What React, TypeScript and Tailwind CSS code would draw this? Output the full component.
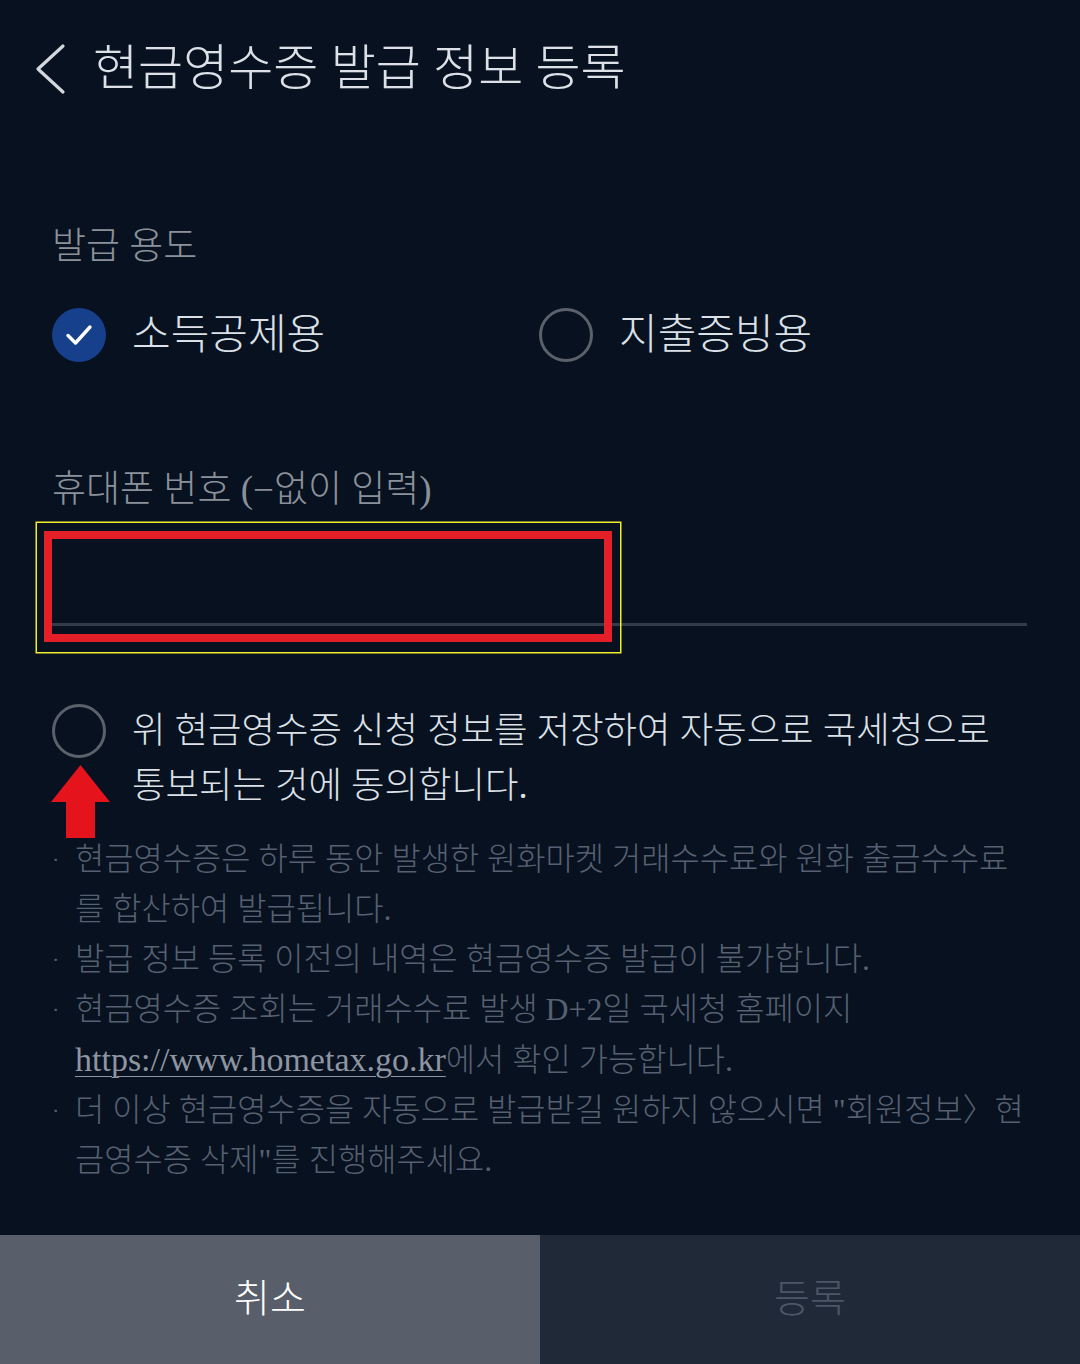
const FONT = "font-['Liberation_Serif','Noto_Sans_CJK_KR',serif]"

function Radio({ checked }: { checked?: boolean }) {
  if (checked) {
    return (
      <span className="flex h-[54px] w-[54px] shrink-0 items-center justify-center rounded-full bg-[#163f8c]">
        <svg width="30" height="24" viewBox="0 0 30 24" fill="none">
          <path d="M4 12.5 L11.5 20 L26 4" stroke="#ffffff" strokeWidth="3.4" strokeLinecap="round" strokeLinejoin="round" />
        </svg>
      </span>
    )
  }
  return <span className="block h-[54px] w-[54px] shrink-0 rounded-full border-[3px] border-[#5b616b]" />
}

const notes: string[][] = [
  ["현금영수증은 하루 동안 발생한 원화마켓 거래수수료와 원화 출금수수료", "를 합산하여 발급됩니다."],
  ["발급 정보 등록 이전의 내역은 현금영수증 발급이 불가합니다."],
]

export default function App() {
  return (
    <div className={`flex min-h-[1364px] w-[1080px] flex-col bg-[#07111f] ${FONT}`}>
      {/* header */}
      <header className="flex items-center pt-[38px]">
        <svg className="ml-[33px]" width="34" height="52" viewBox="0 0 34 52" fill="none">
          <path d="M30 3 L5 26 L30 49" stroke="#d3d8df" strokeWidth="3.2" strokeLinecap="round" strokeLinejoin="round" />
        </svg>
        <h1 className="ml-[26px] text-[49px] font-light leading-[62px] text-[#dce1e8]">현금영수증 발급 정보 등록</h1>
      </header>

      <div className="px-[52px]">
        <p className="mt-[125px] text-[37px] font-light leading-[44px] text-[#8b919b]">발급 용도</p>

        <div className="mt-[39px] flex items-center">
          <div className="flex w-[487px] items-center gap-[26px]">
            <Radio checked />
            <span className="text-[42px] font-light leading-[54px] text-[#dce1e8]">소득공제용</span>
          </div>
          <div className="flex items-center gap-[26px]">
            <Radio />
            <span className="text-[42px] font-light leading-[54px] text-[#dce1e8]">지출증빙용</span>
          </div>
        </div>

        <p className="mt-[106px] text-[37px] font-light leading-[44px] text-[#8b919b]">휴대폰 번호 (−없이 입력)</p>

        <div className="relative mr-[1px] h-[114px] border-b-[3px] border-[#343b48]">
          {/* annotation boxes */}
          <div className="absolute left-[-15px] top-[11px] h-[129px] w-[583px] shadow-[0_0_0_1.5px_#f2ee2e]" />
          <div className="absolute left-[-8px] top-[19px] h-[111px] w-[568px] border-[8px] border-[#e41f27]" />
        </div>

        <div className="relative mt-[78px] flex gap-[26px]">
          <Radio />
          <p className="text-[36.4px] font-light leading-[55px] text-[#dce1e8]">
            위 현금영수증 신청 정보를 저장하여 자동으로 국세청으로
            <br />
            통보되는 것에 동의합니다.
          </p>
          <svg className="absolute left-[-1px] top-[61px]" width="59" height="73" viewBox="0 0 59 73">
            <path d="M29.5 0 L59 37 L44 37 L44 73 L15 73 L15 37 L0 37 Z" fill="#e5141c" />
          </svg>
        </div>

        <ul className="mt-[21px] text-[31.8px] font-light leading-[50px] text-[#566071]">
          {notes.map((lines, i) => (
            <li key={i} className="flex">
              <span className="w-[23px] shrink-0 text-[22px]">·</span>
              <div>
                {lines.map((l, j) => (
                  <div key={j} className="whitespace-nowrap">{l}</div>
                ))}
              </div>
            </li>
          ))}
          <li className="flex">
            <span className="w-[23px] shrink-0 text-[22px]">·</span>
            <div>
              <div className="whitespace-nowrap">현금영수증 조회는 거래수수료 발생 D+2일 국세청 홈페이지</div>
              <div className="whitespace-nowrap">
                <span className="text-[34px] text-[#8e95a1] underline decoration-1 underline-offset-[5px]">https://www.hometax.go.kr</span>에서 확인 가능합니다.
              </div>
            </div>
          </li>
          <li className="flex">
            <span className="w-[23px] shrink-0 text-[22px]">·</span>
            <div>
              <div className="whitespace-nowrap">더 이상 현금영수증을 자동으로 발급받길 원하지 않으시면 "회원정보〉현</div>
              <div className="whitespace-nowrap">금영수증 삭제"를 진행해주세요.</div>
            </div>
          </li>
        </ul>
      </div>

      <footer className="mt-auto flex h-[129px]">
        <button className="flex flex-1 items-center justify-center bg-[#585f6b] text-[39px] font-light text-[#ffffff]">취소</button>
        <button className="flex flex-1 items-center justify-center bg-[#1f2938] text-[39px] font-light text-[#4c5666]">등록</button>
      </footer>
    </div>
  )
}
